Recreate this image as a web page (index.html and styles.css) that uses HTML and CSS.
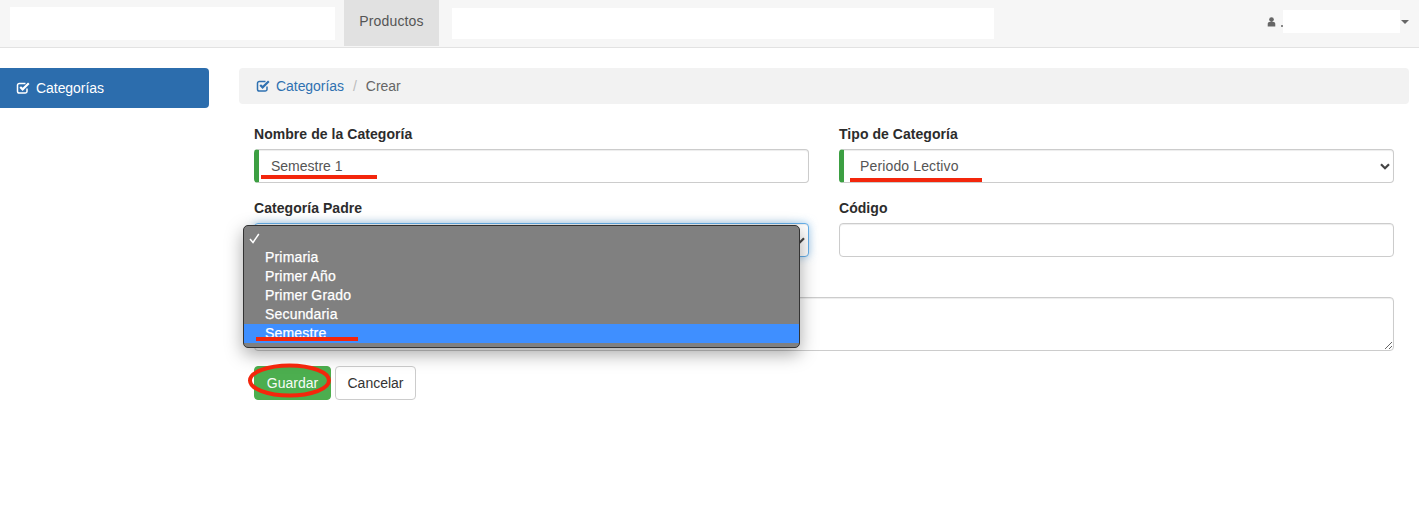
FILE: index.html
```html
<!DOCTYPE html>
<html lang="es">
<head>
<meta charset="utf-8">
<title>Categorías - Crear</title>
<link rel="stylesheet" href="styles.css">
</head>
<body>
<svg class="defs" width="0" height="0" aria-hidden="true">
  <symbol id="check-square" viewBox="0 0 14 14">
    <path d="M11 7.6v2.6A1.8 1.8 0 0 1 9.2 12H3.3a1.8 1.8 0 0 1-1.8-1.8V4.3a1.8 1.8 0 0 1 1.8-1.8h6.2" fill="none" stroke="currentColor" stroke-width="1.5"/>
    <path d="M4.2 6 6.6 8.4 12.8 2.3" fill="none" stroke="currentColor" stroke-width="2.2"/>
  </symbol>
  <symbol id="chevron" viewBox="0 0 10 7">
    <path d="M1 1.2 5 5.2 9 1.2" fill="none" stroke="currentColor" stroke-width="2.2"/>
  </symbol>
</svg>
<header class="navbar">
  <div class="mask mask-brand"></div>
  <a class="nav-item">Productos</a>
  <div class="mask mask-search"></div>
  <div class="user">
    <svg class="user-icon" viewBox="0 0 10 11"><circle cx="5" cy="2.8" r="2.6" fill="currentColor"/><path d="M.8 10.5V7.6C.8 6.3 1.8 5.6 3 5.6h4c1.2 0 2.2.7 2.2 2v2.9z" fill="currentColor"/></svg>
    <span class="user-dot"></span>
    <div class="mask mask-user"></div>
    <span class="caret"></span>
  </div>
</header>
<div class="page">
  <aside class="sidebar">
    <a class="side-link"><svg class="icon"><use href="#check-square"/></svg>Categorías</a>
  </aside>
  <main class="main">
    <nav class="breadcrumb">
      <a class="crumb-link"><svg class="icon"><use href="#check-square"/></svg>Categorías</a>
      <span class="crumb-sep">/</span>
      <span class="crumb-current">Crear</span>
    </nav>
    <form class="form">
      <div class="grid">
        <div class="field">
          <label class="label">Nombre de la Categoría</label>
          <input class="control required" value="Semestre 1">
        </div>
        <div class="field">
          <label class="label">Tipo de Categoría</label>
          <div class="select-wrap">
            <select class="control required select-lead"><option>Periodo Lectivo</option></select>
            <svg class="chevron"><use href="#chevron"/></svg>
          </div>
        </div>
        <div class="field">
          <label class="label">Categoría Padre</label>
          <div class="select-wrap">
            <select class="control focused"><option></option></select>
            <svg class="chevron"><use href="#chevron"/></svg>
          </div>
        </div>
        <div class="field">
          <label class="label">Código</label>
          <input class="control">
        </div>
        <div class="field wide">
          <div class="label"></div>
          <textarea class="control area"></textarea>
        </div>
      </div>
      <div class="actions">
        <button type="button" class="btn btn-save">Guardar</button>
        <button type="button" class="btn btn-cancel">Cancelar</button>
      </div>
    </form>
  </main>
</div>

<ul class="menu">
  <li class="menu-item"><svg class="tick" viewBox="0 0 11 11"><path d="M1 6 4 9.5 9.8 1" fill="none" stroke="currentColor" stroke-width="1.5"/></svg></li>
  <li class="menu-item">Primaria</li>
  <li class="menu-item">Primer Año</li>
  <li class="menu-item">Primer Grado</li>
  <li class="menu-item">Secundaria</li>
  <li class="menu-item active">Semestre</li>
</ul>

<span class="mark mark-name"></span>
<span class="mark mark-type"></span>
<span class="mark mark-parent"></span>
<svg class="ring" viewBox="0 0 84 35"><ellipse cx="42.5" cy="17.5" rx="39.5" ry="15" fill="none" stroke="#f3260c" stroke-width="4"/></svg>
</body>
</html>
```
FILE: styles.css
```css
* { box-sizing: border-box; }
html, body { margin: 0; padding: 0; }
body {
  position: relative;
  height: 515px;
  overflow: hidden;
  background: #fff;
  color: #333;
  font: 14px/20px "Liberation Sans", Arial, sans-serif;
}
.defs { position: absolute; }

.navbar {
  display: flex;
  align-items: flex-start;
  height: 48px;
  padding-left: 10px;
  background: #f6f6f6;
  border-bottom: 1px solid #e2e2e2;
}
.mask { background: #fff; }
.mask-brand { width: 325px; height: 33px; margin-top: 7px; }
.nav-item {
  width: 95px;
  height: 46px;
  margin-left: 9px;
  padding-top: 11px;
  text-align: center;
  letter-spacing: .15px;
  color: #555;
  background: #e1e1e1;
}
.mask-search { width: 542px; height: 31px; margin: 8px 0 0 13px; }
.user {
  display: flex;
  align-items: flex-start;
  margin-left: auto;
  color: #666;
}
.user-icon { width: 9px; height: 10px; margin-top: 17px; }
.user-dot { width: 2px; height: 2px; margin: 25px 0 0 5px; background: #888; }
.mask-user { width: 117px; height: 23px; margin: 10px 0 0 0; }
.caret {
  width: 0;
  height: 0;
  margin: 20px 10px 0 1px;
  border: 4px solid transparent;
  border-top-color: #666;
  border-bottom: 0;
}

.page {
  display: flex;
  align-items: flex-start;
  padding-top: 20px;
}
.sidebar { width: 209px; flex: none; }
.side-link {
  display: flex;
  align-items: center;
  height: 40px;
  padding-left: 16px;
  color: #fff;
  background: #2c6dad;
  border-radius: 0 4px 4px 0;
  letter-spacing: -.05px;
}
.icon { width: 14px; height: 14px; margin-right: 6px; flex: none; }
.main { width: 1170px; margin-left: 30px; }
.breadcrumb {
  display: flex;
  align-items: center;
  height: 36px;
  padding-left: 17px;
  background: #f2f2f2;
  border-radius: 4px;
  color: #666;
  letter-spacing: -.05px;
}
.crumb-link { display: flex; align-items: center; color: #2f71b1; }
.crumb-sep { margin: 0 9px; color: #bbb; }

.form { padding: 20px 15px 0; }
.grid {
  display: grid;
  grid-template-columns: 555px 555px;
  column-gap: 30px;
  row-gap: 15px;
}
.field { display: flex; flex-direction: column; }
.wide { grid-column: 1 / -1; }
.label {
  height: 25px;
  font-weight: 700;
  color: #2c2c2c;
  letter-spacing: .05px;
}
.control {
  display: block;
  width: 100%;
  height: 34px;
  margin: 0;
  padding: 6px 12px;
  font: inherit;
  color: #555;
  background: #fff;
  border: 1px solid #ccc;
  border-radius: 4px;
  box-shadow: inset 0 1px 1px rgba(0, 0, 0, .075);
  outline: 0;
}
.required { border-left: 5px solid #3c9f42; }
.select-wrap { position: relative; }
select.control { appearance: none; -webkit-appearance: none; }
.select-lead { padding-left: 16px; letter-spacing: .14px; }
.chevron {
  position: absolute;
  right: 4px;
  top: 14px;
  width: 10px;
  height: 7px;
  color: #444;
  pointer-events: none;
}
.focused {
  border-color: #66afe9;
  box-shadow: inset 0 1px 1px rgba(0, 0, 0, .075), 0 0 8px rgba(102, 175, 233, .6);
}
.area { height: 54px; resize: vertical; }

.actions { display: flex; gap: 4px; margin-top: 15px; }
.btn {
  height: 34px;
  padding: 6px 12px;
  font: inherit;
  border: 1px solid transparent;
  border-radius: 4px;
}
.btn-save { width: 77px; padding: 6px 0; background: #4cae4f; color: #f7fbf7; border-color: #4cae4c; }
.btn-cancel { width: 81px; padding: 6px 0; background: #fff; color: #333; border-color: #ccc; }

.menu {
  position: absolute;
  left: 243px;
  top: 225px;
  width: 557px;
  height: 123px;
  margin: 0;
  padding: 3px 0 0;
  list-style: none;
  background: #808080;
  border: 1px solid #333;
  border-radius: 5px;
  box-shadow: 0 6px 18px rgba(0, 0, 0, .35);
  color: #fff;
  overflow: hidden;
}
.menu-item {
  position: relative;
  height: 19px;
  padding-left: 21px;
  line-height: 19px;
  font-weight: 400;
  letter-spacing: .18px;
  -webkit-text-stroke: .25px #fff;
}
.menu-item.active { background: #3f8fff; }
.tick { position: absolute; left: 5px; top: 4px; width: 11px; height: 11px; }

.mark { position: absolute; background: #f3260c; }
.mark-name { left: 261px; top: 175px; width: 116px; height: 4px; }
.mark-type { left: 850px; top: 178px; width: 132px; height: 4px; }
.mark-parent { left: 256px; top: 337px; width: 102px; height: 4px; }
.ring { position: absolute; left: 247px; top: 363px; width: 84px; height: 35px; }
```
